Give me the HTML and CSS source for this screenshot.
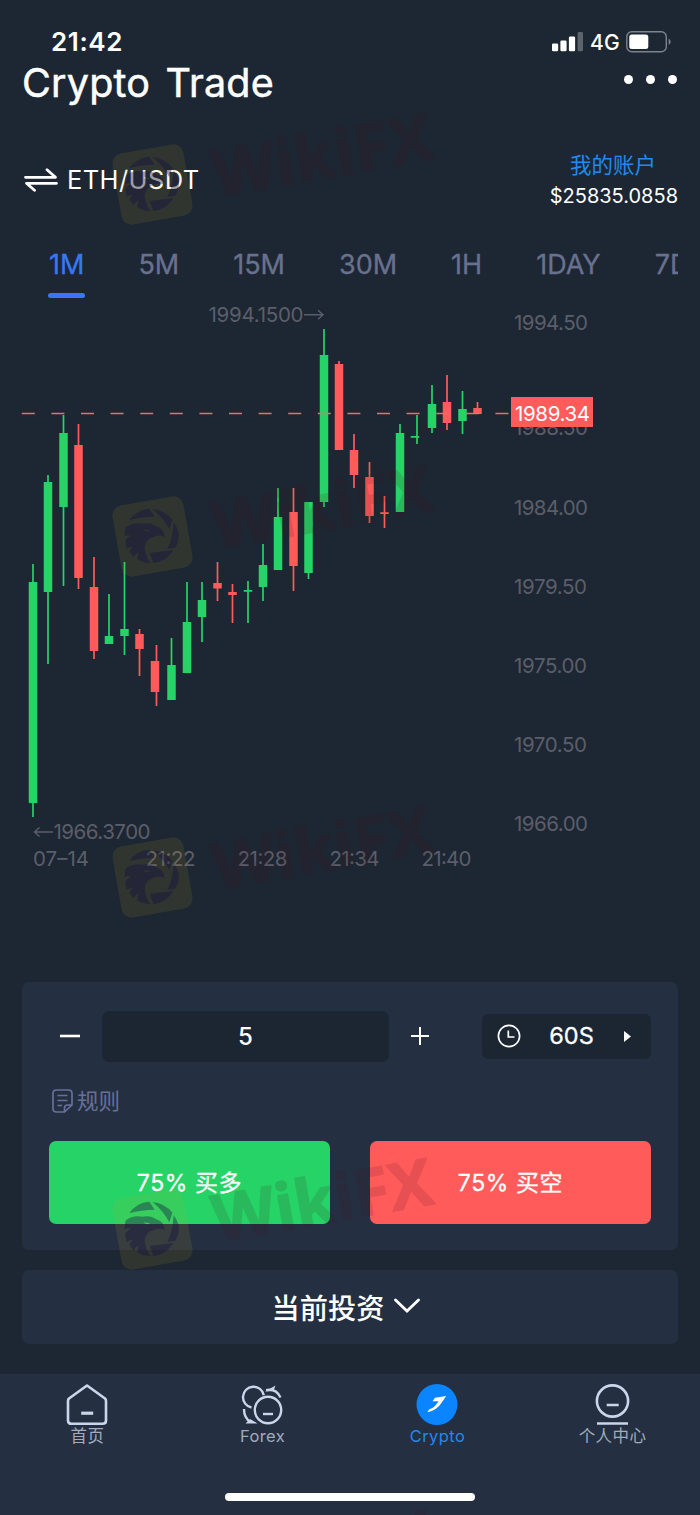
FILE: index.html
```html
<!DOCTYPE html>
<html lang="zh-CN">
<head>
<meta charset="utf-8">
<title>Crypto Trade</title>
<link rel="stylesheet" href="styles.css">
</head>
<body>
<div class="app">
  <div class="status">
    <span class="clock">21:42</span>
    <div class="signal">
      <svg width="32" height="20" viewBox="0 0 32 20"><g fill="#fff"><rect x="0" y="11.5" width="6.2" height="7.8" rx="1.3"/><rect x="8.4" y="8.5" width="6.2" height="10.8" rx="1.3"/><rect x="16.9" y="4.5" width="6.2" height="14.8" rx="1.3"/><rect x="25.6" y="0" width="5.4" height="19.3" rx="1.3" opacity=".28"/></g></svg>
      <span class="net">4G</span>
      <svg width="46" height="22" viewBox="0 0 46 22"><rect x=".8" y=".8" width="39.5" height="20" rx="5" fill="none" stroke="#7c838b" stroke-width="1.4"/><rect x="3.3" y="3.6" width="19" height="14.4" rx="2.5" fill="#fff"/><path d="M42.7 7.5q2 1.3 2 3.2t-2 3.2z" fill="#7c838b"/></svg>
    </div>
  </div>
  <header class="head">
    <h1>Crypto Trade</h1>
    <div class="dots"><i></i><i></i><i></i></div>
  </header>
  <div class="pair-row">
    <div class="pair">
      <svg width="34" height="24" viewBox="0 0 34 24" fill="none" stroke="#fff" stroke-width="2.8" stroke-linecap="round" stroke-linejoin="round"><path d="M1.5 9.300H31.500L23 1.800M32.500 15.300H2.500L10.500 22.300"/></svg>
      <span>ETH/USDT</span>
    </div>
    <div class="account">
      <span class="acc-name">我的账户</span>
      <span class="acc-sum">$25835.0858</span>
    </div>
  </div>
  <nav class="tabs">
    <span class="tab on">1M</span><span class="tab">5M</span><span class="tab">15M</span><span class="tab">30M</span><span class="tab">1H</span><span class="tab">1DAY</span><span class="tab">7DAY</span>
  </nav>
  <svg class="chart" viewBox="0 300 700 682" width="700" height="682">
    <g class="up">
      <path class="wick" d="M33 564V817M48 475V664M63.5 415V586M109 594V644M124.5 562V655M171.5 638V700M187 582V673M202 582V642M248 581V623M263 544V601M278 488V570M308.5 502V579M324 329V507M400 424V512M417 415V444M432 385V433M462.5 391V434"/>
      <path class="bar" d="M33 582V803M48 482V592M63.5 433V507M109 636V644M124.5 629V636M171.5 665V700M187 622V673M202 600V617M248 590V591.8M263 565V587M278 517V570M308.5 502V573M324 355V502M400 433V512M415 436V437.8M432 404V428M462.5 409V421"/>
    </g>
    <g class="down">
      <path class="wick" d="M78.5 424V589M94 557V659M139.5 629V676M156.5 645V706M217.5 562V601M232.5 584V623M293.5 488V591M339 361V450M354 434V488M369.5 462V523M384.5 496V528M447 375V430M477.5 402V413"/>
      <path class="bar" d="M78.5 445V578M94 587V651M139.5 634V649M155 661V692M217.5 583V588.5M232.5 592V595M293.5 512V566M339 364V450M354 450V475M369.5 477V516M384.5 512.3V514M447 402V423M477.5 408V414"/>
    </g>
    <path class="last" d="M21.8 413.4H509"/>
    <g class="axis">
      <text x="514" y="330" textLength="74">1994.50</text>
      <text x="514" y="435" textLength="74">1988.50</text>
      <text x="514" y="515" textLength="74">1984.00</text>
      <text x="514" y="594" textLength="73">1979.50</text>
      <text x="514" y="673" textLength="73">1975.00</text>
      <text x="514" y="752" textLength="73">1970.50</text>
      <text x="514" y="831" textLength="74">1966.00</text>
      <text x="33" y="866" textLength="56">07–14</text>
      <text x="145.500" y="866" textLength="50">21:22</text>
      <text x="237.500" y="866" textLength="50">21:28</text>
      <text x="329.500" y="866" textLength="50">21:34</text>
      <text x="421.500" y="866" textLength="50">21:40</text>
      <text x="208.500" y="322" textLength="95">1994.1500</text>
      <text x="53.5" y="839" textLength="97">1966.3700</text>
      <path d="M304 314.7H323M318 310.2l5 4.5-5 4.5M53 832H34.5M39.5 827.5l-5 4.5 5 4.5"/>
    </g>
    <rect x="511" y="397" width="82" height="30" fill="#ff5b5b"/>
    <text class="now" x="515" y="421" textLength="75">1989.34</text>
  </svg>
  <section class="card order">
    <div class="order-row">
      <span class="step"><svg width="22" height="22" viewBox="0 0 22 22"><path d="M1 11H21" stroke="#fff" stroke-width="2.6"/></svg></span>
      <div class="amount">5</div>
      <span class="step plus"><svg width="20" height="20" viewBox="0 0 20 20"><path d="M1 10H19M10 1V19" stroke="#fff" stroke-width="2"/></svg></span>
      <div class="period">
        <svg width="24" height="24" viewBox="0 0 24 24" fill="none" stroke="#fff" stroke-width="1.7"><circle cx="12" cy="12" r="10.6"/><path d="M11.3 6.5V13H17.5"/></svg>
        <span>60S</span>
        <svg width="7" height="11" viewBox="0 0 7 11"><path d="M0 0L7 5.5L0 11z" fill="#fff"/></svg>
      </div>
    </div>
    <div class="rules">
      <svg width="21" height="24" viewBox="0 0 21 24" fill="none" stroke="#66709a" stroke-width="1.7" stroke-linejoin="round"><path d="M12.5 23H4.5Q1 23 1 19.5V4.5Q1 1 4.5 1H16.5Q20 1 20 4.5V16L12.5 23V19Q12.5 16 15.5 16H20"/><path d="M5.5 6.5H15.5M5.5 11.5H15.5M5.5 16.5H10"/></svg>
      <span>规则</span>
    </div>
    <div class="buttons">
      <div class="btn buy">75% 买多</div>
      <div class="btn sell">75% 买空</div>
    </div>
  </section>
  <section class="card invest">
    <span>当前投资</span>
    <svg width="26" height="16" viewBox="0 0 26 16"><path d="M1.5 2L13 13L24.5 2" fill="none" stroke="#fff" stroke-width="2.8" stroke-linecap="round"/></svg>
  </section>
  <nav class="bottom">
    <div class="item">
      <svg width="42" height="42" viewBox="0 0 42 42" fill="none" stroke="#cbd6ec" stroke-width="2.6" stroke-linejoin="round"><path d="M21 1.5L39 14.5Q40 15.5 40 17V36.5Q40 39.8 36.5 39.8H5.5Q2 39.8 2 36.5V17Q2 15.5 3 14.5Z"/><path d="M15.2 29.2H27.2" stroke-width="3.2"/></svg>
      <span>首页</span>
    </div>
    <div class="item">
      <svg width="42" height="42" viewBox="0 0 42 42" fill="none" stroke="#cbd6ec" stroke-width="2.4"><circle cx="27" cy="26" r="13.200"/><path d="M22 30H32"/><path d="M10.500 23.500A10.500 10.500 0 1 1 22.800 11.200M25 6.200Q35 4 39.500 13.500M3 25Q3 34 9.500 38"/><path d="M24 7.500L34.500 1.500L32.500 7ZM4.500 39.400H16.500L9 35Z" fill="#cbd6ec" stroke="none"/></svg>
      <span>Forex</span>
    </div>
    <div class="item active">
      <svg width="42" height="42" viewBox="0 0 42 42"><circle cx="21" cy="20.500" r="20.500" fill="#0b84ff"/><path d="M16.500 17.200L19 13.800L30.200 12L26.500 17.500Q20.500 27 11.300 28.200L13.300 25.300Q18.500 24 22.500 17.200Z" fill="#fff"/></svg>
      <span>Crypto</span>
    </div>
    <div class="item">
      <svg width="42" height="42" viewBox="0 0 42 42" fill="none" stroke="#cbd6ec" stroke-width="2.600"><circle cx="21.500" cy="17" r="15.600"/><path d="M15.700 21H27.700M6 39.500H37"/></svg>
      <span>个人中心</span>
    </div>
    <div class="homebar"></div>
  </nav>
  <svg class="marks" viewBox="0 0 700 1515" width="700" height="1515">
    <defs>
      <g id="mark">
        <rect x="-36" y="-36" width="72" height="72" rx="10" transform="translate(152.500 184.500) rotate(-10)" fill="#d8b01c" opacity=".11"/>
        <g transform="translate(100 128) scale(.3333)" fill="#111043" opacity=".38">
          <path d="M88 121Q108 89 148 86L164 110Q124 110 88 121Z"/>
          <path d="M158 87Q196 92 217 119L208 148Q192 116 158 87Z"/>
          <path d="M221 127Q250 166 226 203L202 207Q218 178 221 127Z"/>
          <path d="M149 219L220 210Q200 245 160 249Z"/>
          <path d="M78 142Q98 126 128 131Q152 126 168 139Q193 145 194 172Q180 162 162 170Q138 176 134 200Q134 222 151 249Q128 249 112 238Q112 226 118 216Q105 224 101 232L88 215L98 200Q88 202 80 206L75 182Q84 170 94 168Q84 164 74 168Q74 150 78 142ZM131 148Q138 158 151 151Z" fill-rule="evenodd"/>
        </g>
        <text class="wm" x="-2" y="0" textLength="222" transform="translate(219 197) rotate(-10)">WikiFX</text>
      </g>
    </defs>
    <use href="#mark"/><use href="#mark" y="352"/><use href="#mark" y="693"/><use href="#mark" y="1045"/><use href="#mark" y="1397"/>
  </svg>
</div>
</body>
</html>
```

FILE: styles.css
```css
* { box-sizing: border-box; }
body {
  margin: 0;
  background: #1c2733;
  color: #fff;
  font-family: Inter, "Noto Sans CJK SC", sans-serif;
}
.app {
  position: relative;
  width: 700px;
  height: 1515px;
  overflow: hidden;
  display: flex;
  flex-direction: column;
}
svg { display: block; flex: none; }

.status {
  height: 60px;
  padding: 24px 28px 0 51px;
  display: flex;
  justify-content: space-between;
  align-items: center;
}
.clock { font-size: 26px; font-weight: 600; letter-spacing: .6px; line-height: 36px; }
.signal { display: flex; align-items: center; }
.net { font-size: 21px; font-weight: 500; margin: 0 6px 0 6px; letter-spacing: .3px; }

.head {
  height: 46px;
  padding: 0 23px 0 22px;
  display: flex;
  justify-content: space-between;
}
h1 { margin: 0; font-size: 39.500px; font-weight: 400; line-height: 46px; letter-spacing: .2px; word-spacing: 4px; -webkit-text-stroke: .5px #fff; }
.dots { display: flex; gap: 13px; padding-top: 15px; }
.dots i { width: 9px; height: 9px; border-radius: 50%; background: #fff; }

.pair-row {
  height: 134px;
  padding: 44px 22px 0 24px;
  display: flex;
  justify-content: space-between;
}
.pair { display: flex; gap: 9px; height: 59px; align-items: center; font-size: 25.500px; letter-spacing: .4px; }
.account { display: flex; flex-direction: column; align-items: flex-end; }
.acc-name { font-size: 21.500px; line-height: 30px; color: #2189f0; padding-right: 22px; }
.acc-sum { font-size: 20px; line-height: 32px; letter-spacing: 0; }

.tabs {
  height: 60px;
  margin: 0 22px;
  display: flex;
  overflow: hidden;
  color: #69718f;
}
.tab {
  flex: none;
  margin: 0 27px;
  height: 58px;
  padding-top: 8px;
  font-size: 27px;
  font-weight: 400;
  line-height: 34px;
  -webkit-text-stroke: .3px currentColor;
}
.tab.on { color: #3878f6; display: flex; flex-direction: column; justify-content: space-between; }
.tab.on::after { content: ""; height: 5px; margin: 0 -1px; border-radius: 3px; background: #3878f6; }

.chart { height: 682px; }
.wick { fill: none; stroke-width: 1.700; }
.bar { fill: none; stroke-width: 8.500; }
.up { stroke: #25d366; }
.down { stroke: #ff5b5b; }
.last { stroke: #f06a72; stroke-width: 1.500; stroke-dasharray: 13 16.600; }
.axis text, .now { font-size: 20.500px; fill: #5b5e6a; }
.axis path { fill: none; stroke: #5b5e6a; stroke-width: 1.400; }
.chart .now { fill: #fff; }

.card { margin: 0 22px; background: #243042; border-radius: 7px; }
.order { height: 268px; padding: 28px 27px 27px; flex: none; }
.order-row { display: flex; align-items: center; height: 52px; }
.step { width: 53px; padding-left: 10px; }
.step.plus { width: 93px; padding-left: 21px; }
.amount {
  width: 287px;
  height: 51px;
  border-radius: 7px;
  background: #1c2633;
  text-align: center;
  font-size: 24px;
  font-weight: 500;
  line-height: 51px;
}
.period {
  width: 169px;
  height: 45px;
  border-radius: 6px;
  background: #1c2633;
  padding: 0 20px 0 15px;
  display: flex;
  align-items: center;
  justify-content: space-between;
  font-size: 23.500px;
  -webkit-text-stroke: .3px #fff;
}
.period span { padding: 0 2px 1px 0; }
.rules {
  height: 60px;
  margin-top: 9px;
  padding-left: 3px;
  display: flex;
  align-items: center;
  gap: 4px;
  font-size: 21.500px;
  line-height: 30px;
  color: #66709a;
}
.rules span { padding-bottom: 1px; }
.buttons { display: flex; justify-content: space-between; margin-top: 10px; }
.btn {
  width: 281px;
  height: 83px;
  border-radius: 7px;
  text-align: center;
  font-size: 23px;
  line-height: 85px;
  font-weight: 400;
  letter-spacing: .6px;
  -webkit-text-stroke: .3px #fff;
}
.buy { background: #25d366; }
.sell { background: #ff5b5b; }
.invest {
  height: 74px;
  margin-top: 20px;
  padding: 0 8px 2px 0;
  flex: none;
  display: flex;
  align-items: center;
  justify-content: center;
  gap: 10px;
  font-size: 28.200px;
  font-weight: 500;
}
.bottom {
  position: relative;
  margin-top: 30px;
  height: 141px;
  background: #242f41;
  display: flex;
  flex: none;
}
.item {
  width: 175px;
  padding-top: 10px;
  display: flex;
  flex-direction: column;
  align-items: center;
  font-size: 16.500px;
  line-height: 21px;
  color: #a3abbc;
}
.item svg { margin-right: 1px; }
.item span { letter-spacing: .4px; }
.item.active { color: #2189f0; }
.homebar {
  position: absolute;
  left: 225px;
  bottom: 14px;
  width: 250px;
  height: 8px;
  border-radius: 4px;
  background: #fff;
}
.marks { position: absolute; left: 0; top: 0; pointer-events: none; }
.wm {
  font-family: "Open Sans", sans-serif;
  font-size: 65px;
  font-weight: 700;
  fill: #4a0f18;
  stroke: #4a0f18;
  stroke-width: 1.500;
  stroke-linejoin: round;
  opacity: .13;
}
```
